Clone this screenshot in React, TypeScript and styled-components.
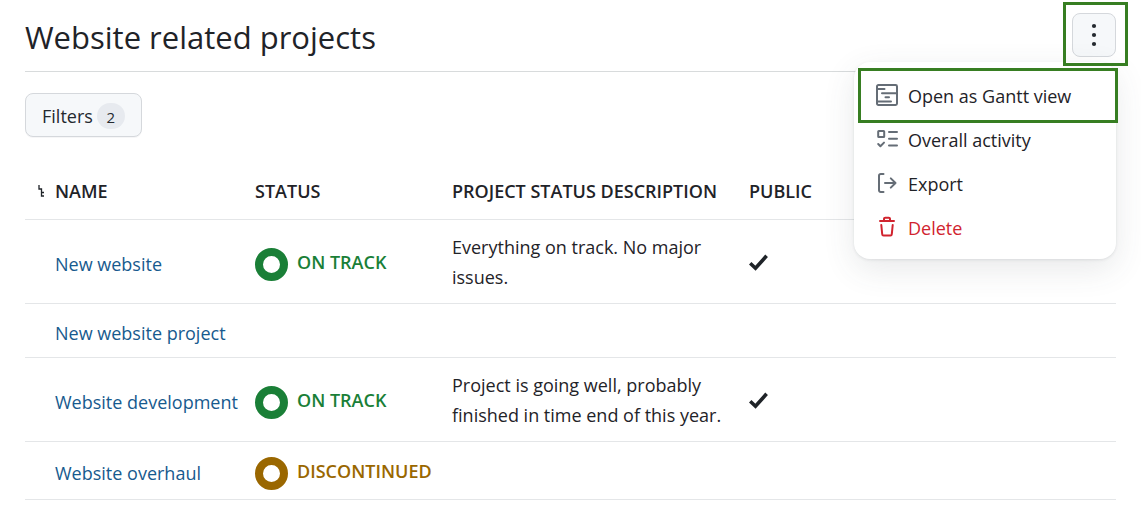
import React from 'react';
import styled, { createGlobalStyle } from 'styled-components';

const GlobalStyle = createGlobalStyle`
  *, *::before, *::after { box-sizing: border-box; }
  body {
    margin: 0;
    background: #fff;
    color: #1f2328;
    font: 18px/30px "Open Sans", "Noto Sans", sans-serif;
  }
`;

const Page = styled.main`
  padding: 0 25px;
`;

const Header = styled.header`
  position: relative;
  display: flex;
  align-items: flex-start;
  justify-content: space-between;
  height: 72px;
  padding-top: 13px;
  border-bottom: 1px solid #d8dbdc;
`;

const Title = styled.h1`
  margin: 0;
  font-size: 31px;
  font-weight: 400;
  line-height: 48px;
`;

const Spotlight = styled.span<{ $inset: string }>`
  position: absolute;
  z-index: 2;
  inset: ${(p) => p.$inset};
  border: 3px solid #377e22;
  pointer-events: none;
`;

const MenuAnchor = styled.div`
  position: relative;
`;

const KebabButton = styled.button`
  display: grid;
  place-items: center;
  width: 44px;
  height: 44px;
  padding: 0;
  border: 1px solid #d5d8dc;
  border-radius: 8px;
  background: #f6f8fa;
  color: #24292f;
`;

const Menu = styled.ul`
  position: absolute;
  z-index: 1;
  top: 49px;
  right: 0;
  width: 262px;
  margin: 0;
  padding: 12px 0 9px;
  border-radius: 16px;
  background: #fff;
  box-shadow: 0 1px 3px rgba(66, 74, 83, 0.12), 0 10px 32px rgba(66, 74, 83, 0.12);
  list-style: none;
`;

const MenuItem = styled.li`
  position: relative;
`;

const MenuButton = styled.button<{ $danger?: boolean }>`
  display: flex;
  align-items: center;
  gap: 10px;
  width: 100%;
  height: 44px;
  padding: 0 22px;
  border: 0;
  background: none;
  color: ${(p) => (p.$danger ? '#d1242f' : '#1f2328')};
  font: inherit;

  svg {
    margin-bottom: 2px;
    color: ${(p) => (p.$danger ? '#d1242f' : '#656d76')};
  }
`;

const FilterButton = styled.button`
  display: flex;
  align-items: center;
  gap: 4px;
  height: 44px;
  margin-top: 21px;
  padding: 2px 16px 0;
  border: 1px solid #d5d8dc;
  border-radius: 8px;
  background: #f6f8fa;
  color: #24292f;
  font: inherit;
  box-shadow: 0 1px 0 rgba(31, 35, 40, 0.04);
`;

const Counter = styled.span`
  min-width: 28px;
  padding-top: 2px;
  border-radius: 13px;
  background: #e7eaef;
  font-size: 15px;
  line-height: 24px;
  text-align: center;
`;

const Table = styled.table`
  width: 100%;
  margin-top: 26px;
  border-collapse: separate;
  border-spacing: 0;
  table-layout: fixed;
`;

const Col = styled.col<{ $width?: number }>`
  width: ${(p) => (p.$width ? `${p.$width}px` : 'auto')};
`;

const HeadCell = styled.th`
  height: 57px;
  padding: 0;
  border-bottom: 1px solid #e4e6e8;
  font-weight: 600;
  text-align: left;
  text-transform: uppercase;
  white-space: nowrap;

  &:first-child {
    padding-left: 12px;
  }

  svg {
    display: block;
  }
`;

const Cell = styled.td<{ $low?: boolean }>`
  padding: ${(p) => (p.$low ? '14px 0 9px' : '12px 0 11px')};
  border-bottom: 1px solid #e4e6e8;
  vertical-align: middle;

  svg {
    display: block;
  }
`;

const ProjectLink = styled.a`
  color: #175a8e;
  text-decoration: none;
  white-space: nowrap;
`;

const Status = styled.span<{ $color: string }>`
  display: flex;
  align-items: center;
  gap: 9px;
  color: ${(p) => p.$color};
  font-weight: 600;
  text-transform: uppercase;
`;

const StatusLabel = styled.span`
  padding-bottom: 4px;
`;

const Bulb = styled.span`
  flex: none;
  width: 33px;
  height: 33px;
  border: 8px solid currentColor;
  border-radius: 50%;
`;

const Description = styled.p`
  max-width: 280px;
  margin: 0;
`;

const KebabIcon = () => (
  <svg width="22" height="24" viewBox="0 0 22 24" fill="currentColor" aria-hidden="true">
    <circle cx="11" cy="3" r="2.1" />
    <circle cx="11" cy="12" r="2.1" />
    <circle cx="11" cy="21" r="2.1" />
  </svg>
);

const strokeProps = {
  width: 22,
  height: 22,
  viewBox: '0 0 22 22',
  fill: 'none',
  stroke: 'currentColor',
  strokeWidth: 2,
  strokeLinecap: 'round' as const,
  strokeLinejoin: 'round' as const,
  'aria-hidden': true,
};

const GanttIcon = () => (
  <svg {...strokeProps}>
    <rect x="1" y="1" width="20" height="20" rx="1.4" />
    <path d="M2 5h6.5M6 9.2h15M9.5 13.3h3.5M2 17.5h13" />
  </svg>
);

const TasklistIcon = () => (
  <svg {...strokeProps}>
    <rect x="2.2" y="3" width="6" height="6" rx="0.6" />
    <path d="M13 4h8M13 10.8h8M13 17.5h8M2.2 16l2.2 2.2L8 14.6" />
  </svg>
);

const ExportIcon = () => (
  <svg {...strokeProps}>
    <path d="M7.5 2H4.7A1.7 1.7 0 0 0 3 3.7v14.6A1.7 1.7 0 0 0 4.7 20h2.8M9 11h10.5M14.8 6.4L19.5 11l-4.7 4.6" />
  </svg>
);

const TrashIcon = () => (
  <svg {...strokeProps}>
    <path d="M4 5h14M8 4.6V3a1.3 1.3 0 0 1 1.3-1.3h3.4A1.3 1.3 0 0 1 14 3v1.6M5.3 9l.9 9.2a1.4 1.4 0 0 0 1.4 1.3h6.8a1.4 1.4 0 0 0 1.4-1.3l.9-9.2" />
  </svg>
);

const HierarchyIcon = () => (
  <svg width="9" height="14" viewBox="0 0 9 14" fill="none" stroke="currentColor" strokeWidth="1.3" role="img" aria-label="Hierarchy">
    <path d="M2 1v4h2.5v7H7M4.5 8.5H7" />
  </svg>
);

const CheckIcon = () => (
  <svg width="19" height="20" viewBox="0 0 19 20" fill="none" stroke="#1f2328" strokeWidth="3.6" role="img" aria-label="Yes">
    <path d="M1.2 11.2L6.5 16.2L17.6 3.8" />
  </svg>
);

const GREEN = '#1a7f37';
const BROWN = '#9a6700';

const projects = [
  { name: 'New website', status: 'On track', color: GREEN, text: 'Everything on track. No major issues.', open: true },
  { name: 'New website project' },
  { name: 'Website development', status: 'On track', color: GREEN, text: 'Project is going well, probably finished in time end of this year.', open: true },
  { name: 'Website overhaul', status: 'Discontinued', color: BROWN },
];

const actions = [
  { label: 'Open as Gantt view', Icon: GanttIcon, spotlight: true },
  { label: 'Overall activity', Icon: TasklistIcon },
  { label: 'Export', Icon: ExportIcon },
  { label: 'Delete', Icon: TrashIcon, danger: true },
];

export default function App() {
  return (
    <Page>
      <GlobalStyle />
      <Header>
        <Title>Website related projects</Title>
        <MenuAnchor>
          <KebabButton type="button" aria-label="More actions">
            <KebabIcon />
          </KebabButton>
          <Menu>
            {actions.map(({ label, Icon, danger, spotlight }) => (
              <MenuItem key={label}>
                <MenuButton type="button" $danger={danger}>
                  <Icon />
                  {label}
                </MenuButton>
                {spotlight && <Spotlight $inset="-6px -2px -5px 4px" />}
              </MenuItem>
            ))}
          </Menu>
          <Spotlight $inset="-11px -12px -9px -9px" />
        </MenuAnchor>
      </Header>
      <FilterButton type="button">
        Filters <Counter>2</Counter>
      </FilterButton>
      <Table>
        <colgroup>
          <Col $width={30} />
          <Col $width={200} />
          <Col $width={197} />
          <Col $width={297} />
          <Col />
        </colgroup>
        <thead>
          <tr>
            <HeadCell><HierarchyIcon /></HeadCell>
            <HeadCell>Name</HeadCell>
            <HeadCell>Status</HeadCell>
            <HeadCell>Project status description</HeadCell>
            <HeadCell>Public</HeadCell>
          </tr>
        </thead>
        <tbody>
          {projects.map((p) => (
            <tr key={p.name}>
              <Cell />
              <Cell $low>
                <ProjectLink href="#">{p.name}</ProjectLink>
              </Cell>
              <Cell $low>
                {p.status && p.color && (
                  <Status $color={p.color}>
                    <Bulb />
                    <StatusLabel>{p.status}</StatusLabel>
                  </Status>
                )}
              </Cell>
              <Cell>{p.text && <Description>{p.text}</Description>}</Cell>
              <Cell>{p.open && <CheckIcon />}</Cell>
            </tr>
          ))}
        </tbody>
      </Table>
    </Page>
  );
}
